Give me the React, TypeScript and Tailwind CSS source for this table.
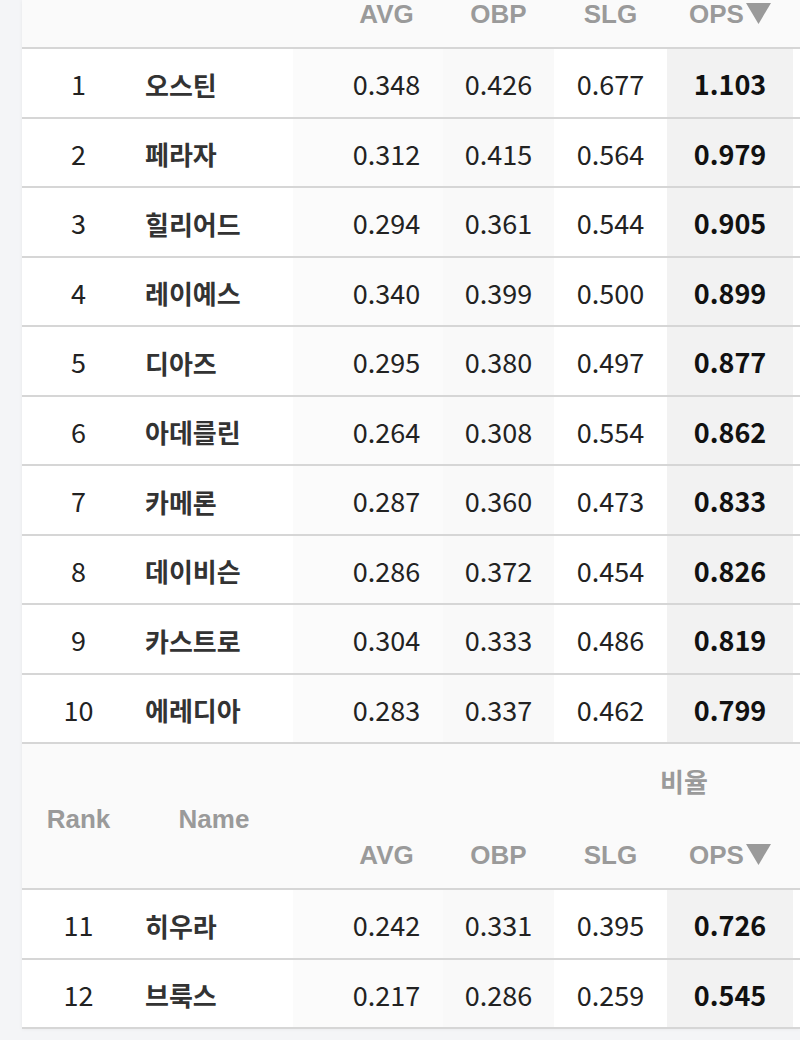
import React from 'react'

type Player = {
  rank: number
  name: string
  avg: string
  obp: string
  slg: string
  ops: string
}

const topPlayers: Player[] = [
  { rank: 1, name: '오스틴', avg: '0.348', obp: '0.426', slg: '0.677', ops: '1.103' },
  { rank: 2, name: '페라자', avg: '0.312', obp: '0.415', slg: '0.564', ops: '0.979' },
  { rank: 3, name: '힐리어드', avg: '0.294', obp: '0.361', slg: '0.544', ops: '0.905' },
  { rank: 4, name: '레이예스', avg: '0.340', obp: '0.399', slg: '0.500', ops: '0.899' },
  { rank: 5, name: '디아즈', avg: '0.295', obp: '0.380', slg: '0.497', ops: '0.877' },
  { rank: 6, name: '아데를린', avg: '0.264', obp: '0.308', slg: '0.554', ops: '0.862' },
  { rank: 7, name: '카메론', avg: '0.287', obp: '0.360', slg: '0.473', ops: '0.833' },
  { rank: 8, name: '데이비슨', avg: '0.286', obp: '0.372', slg: '0.454', ops: '0.826' },
  { rank: 9, name: '카스트로', avg: '0.304', obp: '0.333', slg: '0.486', ops: '0.819' },
  { rank: 10, name: '에레디아', avg: '0.283', obp: '0.337', slg: '0.462', ops: '0.799' },
]

const restPlayers: Player[] = [
  { rank: 11, name: '히우라', avg: '0.242', obp: '0.331', slg: '0.395', ops: '0.726' },
  { rank: 12, name: '브룩스', avg: '0.217', obp: '0.286', slg: '0.259', ops: '0.545' },
]

const cols = 'grid grid-cols-[113px_158px_37px_113px_111px_113px_126px_1fr]'
const headFont = { fontFamily: '"Liberation Sans", "Noto Sans CJK KR", sans-serif' }
const bodyFont = { fontFamily: '"Noto Sans CJK KR", "Noto Sans", sans-serif' }

function SortArrow() {
  return (
    <svg width="25" height="21" viewBox="0 0 25 21" className="ml-[2px] mb-[1px]">
      <path d="M0 0 H25 L12.5 21 Z" fill="#9a9a9a" />
    </svg>
  )
}

function StatHeads() {
  return (
    <>
      <div />
      <div className="flex items-center justify-center">AVG</div>
      <div className="flex items-center justify-center">OBP</div>
      <div className="flex items-center justify-center">SLG</div>
      <div className="flex items-center justify-center">
        OPS
        <SortArrow />
      </div>
      <div />
    </>
  )
}

function CutHeader() {
  // only the lower part of the sticky header is on screen
  return (
    <div className="h-[49px] border-b-2 border-[#d6d6d6] bg-[#fafafa] overflow-hidden flex flex-col justify-end">
      <div
        className={`${cols} h-[66px] shrink-0 text-[26px] font-bold text-[#9a9a9a]`}
        style={headFont}
      >
        <div />
        <div />
        <StatHeads />
      </div>
    </div>
  )
}

function FullHeader() {
  return (
    <div
      className={`${cols} grid-rows-[78px_66px] border-b-2 border-[#d6d6d6] bg-[#fafafa] text-[26px] font-bold text-[#9a9a9a]`}
      style={headFont}
    >
      <div className="row-span-2 flex items-center justify-center pt-[6px]">Rank</div>
      <div className="row-span-2 flex items-center justify-center pt-[6px]">Name</div>
      <div className="col-span-6 flex items-center pl-[367px] text-[26px]">비율</div>
      <StatHeads />
    </div>
  )
}

function Row({ p }: { p: Player }) {
  return (
    <div
      className={`${cols} h-[69.5px] border-b-2 border-[#d6d6d6] text-[27px] text-[#222]`}
      style={bodyFont}
    >
      <div className="flex items-center justify-center pt-[3px] bg-white">{p.rank}</div>
      <div className="flex items-center pl-[10px] pt-[3px] bg-white text-[26px] font-bold text-[#333]">{p.name}</div>
      <div className="bg-[#fbfbfb]" />
      <div className="flex items-center justify-center pt-[3px] bg-[#fbfbfb]">{p.avg}</div>
      <div className="flex items-center justify-center pt-[3px] bg-[#f9f9f9]">{p.obp}</div>
      <div className="flex items-center justify-center pt-[3px] bg-white">{p.slg}</div>
      <div className="flex items-center justify-center pt-[3px] bg-[#f2f2f2] font-bold text-[#111]">{p.ops}</div>
      <div className="bg-white" />
    </div>
  )
}

export default function App() {
  return (
    <div className="w-[800px] h-[1040px] overflow-hidden bg-[#f4f5f7]">
      <div className="ml-[22px] bg-white shadow-[0_0_4px_rgba(0,0,0,0.06)]">
        <CutHeader />
        {topPlayers.map((p) => (
          <Row key={p.rank} p={p} />
        ))}
        <FullHeader />
        {restPlayers.map((p) => (
          <Row key={p.rank} p={p} />
        ))}
      </div>
    </div>
  )
}
